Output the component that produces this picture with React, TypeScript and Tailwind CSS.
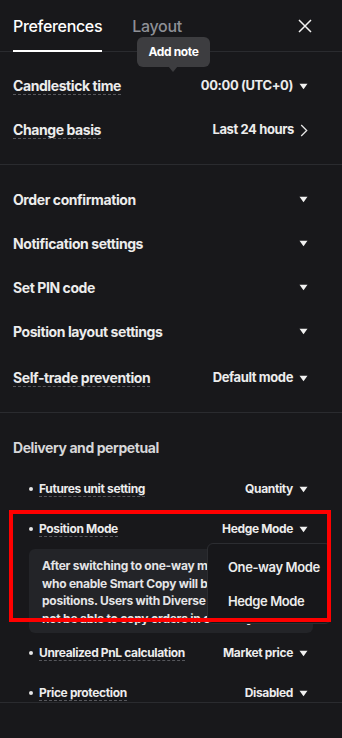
import React from "react";

const Caret = () => (
  <svg width="9" height="7" viewBox="0 0 9 7" className="shrink-0">
    <path d="M0.5 0.8h8L4.5 6.2z" fill="#f0f0f0" />
  </svg>
);

const Chevron = () => (
  <svg width="8" height="13" viewBox="0 0 8 13" className="shrink-0">
    <path d="M1.2 1l5.5 5.5-5.5 5.5" fill="none" stroke="#e6e6e6" strokeWidth="1.3" />
  </svg>
);

const Label = ({text, dashed, small}: {text: string; dashed?: boolean; small?: boolean}) => (
  <span
    className={`font-bold tracking-[-0.03em] ${small ? "text-[12px] leading-[15px]" : "text-[14px] leading-[17px]"} ${
      dashed ? "border-b border-dashed border-[#56575c]" : ""
    } text-[#ececec]`}
  >
    {text}
  </span>
);

const Row = ({label, value, chevron, dashed, extra}: {label: string; value?: string; chevron?: boolean; dashed?: boolean; extra?: string}) => (
  <div className={`h-11 flex items-center justify-between pl-[13px] pr-[34px] ${extra ?? ""}`}>
    <Label text={label} dashed={dashed} />
    <div className="flex items-center gap-[6px]">
      {value && <span className="text-[13px] font-bold tracking-[-0.03em] text-[#ececec]">{value}</span>}
      {chevron ? <Chevron /> : <Caret />}
    </div>
  </div>
);

const SubRow = ({label, value}: {label: string; value: string}) => (
  <div className="h-10 flex items-center justify-between pl-[29px] pr-[34px]">
    <div className="flex items-center gap-[6px]">
      <span className="w-[4px] h-[4px] rounded-full bg-[#e6e6e6]" />
      <Label text={label} dashed small />
    </div>
    <div className="flex items-center gap-[6px]">
      <span className="text-[12px] font-bold tracking-[-0.03em] text-[#ececec]">{value}</span>
      <Caret />
    </div>
  </div>
);

export default function App() {
  return (
    <div
      className="relative w-[342px] h-[738px] bg-[#18181b] flex flex-col overflow-hidden"
      style={{fontFamily: "Inter, 'Noto Sans', sans-serif"}}
    >
      <div className="h-[52px] shrink-0 border-b border-[#2a2b2f] flex items-stretch px-[13px]">
        <div className="flex items-stretch gap-[30px]">
          <div className="flex items-center pt-[1px] border-b-2 border-white -mb-px text-[16px] font-medium text-white tracking-[-0.02em]">
            Preferences
          </div>
          <div className="flex items-center pt-[1px] text-[16px] font-medium text-[#8e9096] tracking-[-0.02em]">Layout</div>
        </div>
        <div className="ml-auto flex items-center pr-[17px]">
          <svg width="14" height="14" viewBox="0 0 14 14">
            <path d="M1 1l12 12M13 1L1 13" stroke="#f2f2f2" strokeWidth="1.5" />
          </svg>
        </div>
      </div>

      <div className="flex-1 overflow-hidden">
        <div className="py-3 border-b border-[#2a2b2f]">
          <Row label="Candlestick time" value="00:00 (UTC+0)" dashed />
          <Row label="Change basis" value="Last 24 hours" chevron dashed />
        </div>
        <div className="py-3 border-b border-[#2a2b2f]">
          <Row label="Order confirmation" />
          <Row label="Notification settings" />
          <Row label="Set PIN code" />
          <Row label="Position layout settings" />
          <Row label="Self-trade prevention" value="Default mode" dashed extra="mt-[3px]" />
        </div>
        <div className="pt-3">
          <div className="h-11 flex items-center pl-[13px]">
            <span className="text-[14px] font-bold tracking-[-0.03em] text-[#d6d6d8]">Delivery and perpetual</span>
          </div>
          <SubRow label="Futures unit setting" value="Quantity" />
          <SubRow label="Position Mode" value="Hedge Mode" />
          <div className="ml-[29px] w-[284px] h-[84px] rounded-[6px] bg-[#232428] px-[13px] py-[8px] overflow-hidden">
            <div className="text-[12px] leading-[17.5px] font-bold tracking-[-0.02em] text-[#e4e4e6] whitespace-nowrap overflow-hidden h-[68px]">
              <div>After switching to one-way mode, users</div>
              <div>who enable Smart Copy will be unable to</div>
              <div>positions. Users with Diverse Futures will</div>
              <div>not be able to copy orders in one-way mode.</div>
            </div>
          </div>
          <SubRow label="Unrealized PnL calculation" value="Market price" />
          <SubRow label="Price protection" value="Disabled" />
        </div>
      </div>

      <div className="h-9 shrink-0 border-t border-[#2a2b2f] bg-[#18181b]" />

      {/* tooltip */}
      <div className="absolute left-[137px] top-[37px] w-[73px] h-[30px] rounded-[6px] bg-[#3d3d40] flex items-center justify-center">
        <span className="text-[12px] font-bold tracking-[-0.03em] text-white">Add note</span>
        <div className="absolute left-[31px] -bottom-[5px] w-0 h-0 border-l-[5px] border-r-[5px] border-t-[6px] border-l-transparent border-r-transparent border-t-[#3d3d40]" />
      </div>

      {/* dropdown menu */}
      <div className="absolute left-[207px] top-[543px] w-[124px] h-[81px] rounded-[6px] bg-[#17171a] border border-[#2c2d31] flex flex-col justify-center pl-[20px] gap-[16px]">
        <span className="text-[13px] font-semibold tracking-[-0.03em] text-[#ececec] leading-[18px]">One-way Mode</span>
        <span className="text-[13px] font-semibold tracking-[-0.03em] text-[#ececec] leading-[18px]">Hedge Mode</span>
      </div>

      {/* highlight */}
      <div className="absolute left-[9px] top-[510px] w-[322px] h-[112px] border-[4px] border-[#ff0000]" />
    </div>
  );
}
